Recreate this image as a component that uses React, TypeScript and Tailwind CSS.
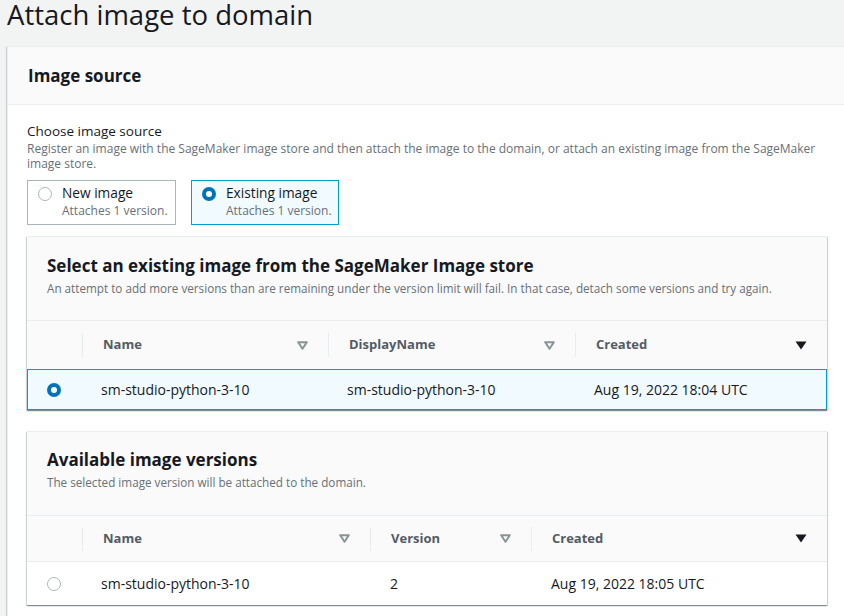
import React from "react";

function SortHollow() {
  return (
    <svg width="11" height="9" viewBox="0 0 11 9" className="shrink-0">
      <polygon points="1.2,1.2 9.8,1.2 5.5,7.8" fill="none" stroke="#879596" strokeWidth="2" strokeLinejoin="round" />
    </svg>
  );
}

function SortFilled() {
  return (
    <svg width="12" height="9" viewBox="0 0 12 9" className="shrink-0">
      <polygon points="0.5,0.5 11.5,0.5 6,8.5" fill="#16191f" />
    </svg>
  );
}

function Radio({ checked }: { checked: boolean }) {
  return checked ? (
    <span className="block w-[14px] h-[14px] rounded-full bg-[#0073bb] flex items-center justify-center shrink-0">
      <span className="block w-[6px] h-[6px] rounded-full bg-white" />
    </span>
  ) : (
    <span className="block w-[14px] h-[14px] rounded-full border border-[#aab7b8] bg-white shrink-0" />
  );
}

function HeaderCell({
  label,
  width,
  icon,
}: {
  label: string;
  width: string;
  icon: "hollow" | "filled";
}) {
  return (
    <div className={`${width} h-full flex items-center`}>
      <div className="w-px h-[24px] bg-[#eaeded] shrink-0" />
      <div className="flex-1 flex items-center justify-between pl-[20px] pr-[20px]">
        <span className="text-[13px] font-bold text-[#545b64]">{label}</span>
        {icon === "hollow" ? <SortHollow /> : <SortFilled />}
      </div>
    </div>
  );
}

const shadow =
  "shadow-[0_1px_1px_0_rgba(0,28,36,0.3),1px_1px_1px_0_rgba(0,28,36,0.15),-1px_1px_1px_0_rgba(0,28,36,0.15)]";

export default function App() {
  return (
    <div className="w-[844px] h-[616px] overflow-hidden bg-[#f2f3f3] text-[#16191f] [font-family:'Open_Sans',Arial,sans-serif]">
      <div className="h-[46px] pl-[7px]">
        <h1 className="text-[27.5px] leading-[30px] font-normal text-[#16191f]">Attach image to domain</h1>
      </div>

      <div className="ml-[7px] bg-white border-t border-l border-[#eaeded] h-[570px] shadow-[-1px_1px_1px_0_rgba(0,28,36,0.15)]">
        <div className="h-[58px] bg-[#fafafa] border-b border-[#eaeded] pl-[20px] flex items-center">
          <h2 className="text-[17px] font-bold leading-[22px]">Image source</h2>
        </div>

        <div className="pl-[19px] pr-[16px] pt-[16px]">
          <div className="text-[13.5px] leading-[20px]">Choose image source</div>
          <div className="text-[12px] leading-[15px] text-[#687078] w-[800px]">
            Register an image with the SageMaker image store and then attach the image to the domain, or attach an existing image from the SageMaker image store.
          </div>

          <div className="flex gap-[15px] mt-[9px]">
            <div className="w-[149px] h-[45px] border border-[#aab7b8] bg-white flex items-start pl-[10px] pt-[5px] gap-[10px]">
              <div className="pt-[1px]"><Radio checked={false} /></div>
              <div className="-mt-[2px]">
                <div className="text-[13.7px] leading-[18px]">New image</div>
                <div className="text-[12px] leading-[16px] text-[#687078] mt-[1px]">Attaches 1 version.</div>
              </div>
            </div>
            <div className="w-[148px] h-[45px] border border-[#00a1c9] bg-[#f1faff] flex items-start pl-[10px] pt-[5px] gap-[10px]">
              <div className="pt-[1px]"><Radio checked={true} /></div>
              <div className="-mt-[2px]">
                <div className="text-[13.7px] leading-[18px]">Existing image</div>
                <div className="text-[12px] leading-[16px] text-[#687078] mt-[1px]">Attaches 1 version.</div>
              </div>
            </div>
          </div>

          {/* Container 1 */}
          <div className={`mt-[11px] w-[800px] bg-white border-t border-[#eaeded] ${shadow}`}>
            <div className="h-[84px] bg-[#fafafa] border-b border-[#eaeded] pl-[20px] pt-[18px]">
              <h3 className="text-[17px] font-bold leading-[22px]">Select an existing image from the SageMaker Image store</h3>
              <p className="text-[11.7px] leading-[16px] text-[#687078] mt-[3px]">
                An attempt to add more versions than are remaining under the version limit will fail. In that case, detach some versions and try again.
              </p>
            </div>
            <div className="h-[48px] bg-[#fafafa] flex items-center">
              <div className="w-[55px]" />
              <HeaderCell label="Name" width="w-[246px]" icon="hollow" />
              <HeaderCell label="DisplayName" width="w-[247px]" icon="hollow" />
              <HeaderCell label="Created" width="w-[252px]" icon="filled" />
            </div>
            <div className="h-[41px] bg-[#f1faff] border border-[#00a1c9] flex items-center text-[14px]">
              <div className="w-[54px] pl-[19px]"><Radio checked={true} /></div>
              <div className="w-[246px] pl-[19px]">sm-studio-python-3-10</div>
              <div className="w-[247px] pl-[19px]">sm-studio-python-3-10</div>
              <div className="flex-1 pl-[19px]">Aug 19, 2022 18:04 UTC</div>
            </div>
          </div>

          {/* Container 2 */}
          <div className={`mt-[21px] w-[800px] bg-white border-t border-[#eaeded] ${shadow}`}>
            <div className="h-[84px] bg-[#fafafa] border-b border-[#eaeded] pl-[20px] pt-[17px]">
              <h3 className="text-[17px] font-bold leading-[22px]">Available image versions</h3>
              <p className="text-[11.7px] leading-[16px] text-[#687078] mt-[3px]">
                The selected image version will be attached to the domain.
              </p>
            </div>
            <div className="h-[46px] bg-[#fafafa] border-b border-[#eaeded] flex items-center">
              <div className="w-[55px]" />
              <HeaderCell label="Name" width="w-[288px]" icon="hollow" />
              <HeaderCell label="Version" width="w-[161px]" icon="hollow" />
              <HeaderCell label="Created" width="w-[296px]" icon="filled" />
            </div>
            <div className="h-[43px] bg-white flex items-center text-[14px]">
              <div className="w-[55px] pl-[20px]"><Radio checked={false} /></div>
              <div className="w-[288px] pl-[19px]">sm-studio-python-3-10</div>
              <div className="w-[161px] pl-[20px]">2</div>
              <div className="flex-1 pl-[20px]">Aug 19, 2022 18:05 UTC</div>
            </div>
          </div>
        </div>
      </div>
    </div>
  );
}
